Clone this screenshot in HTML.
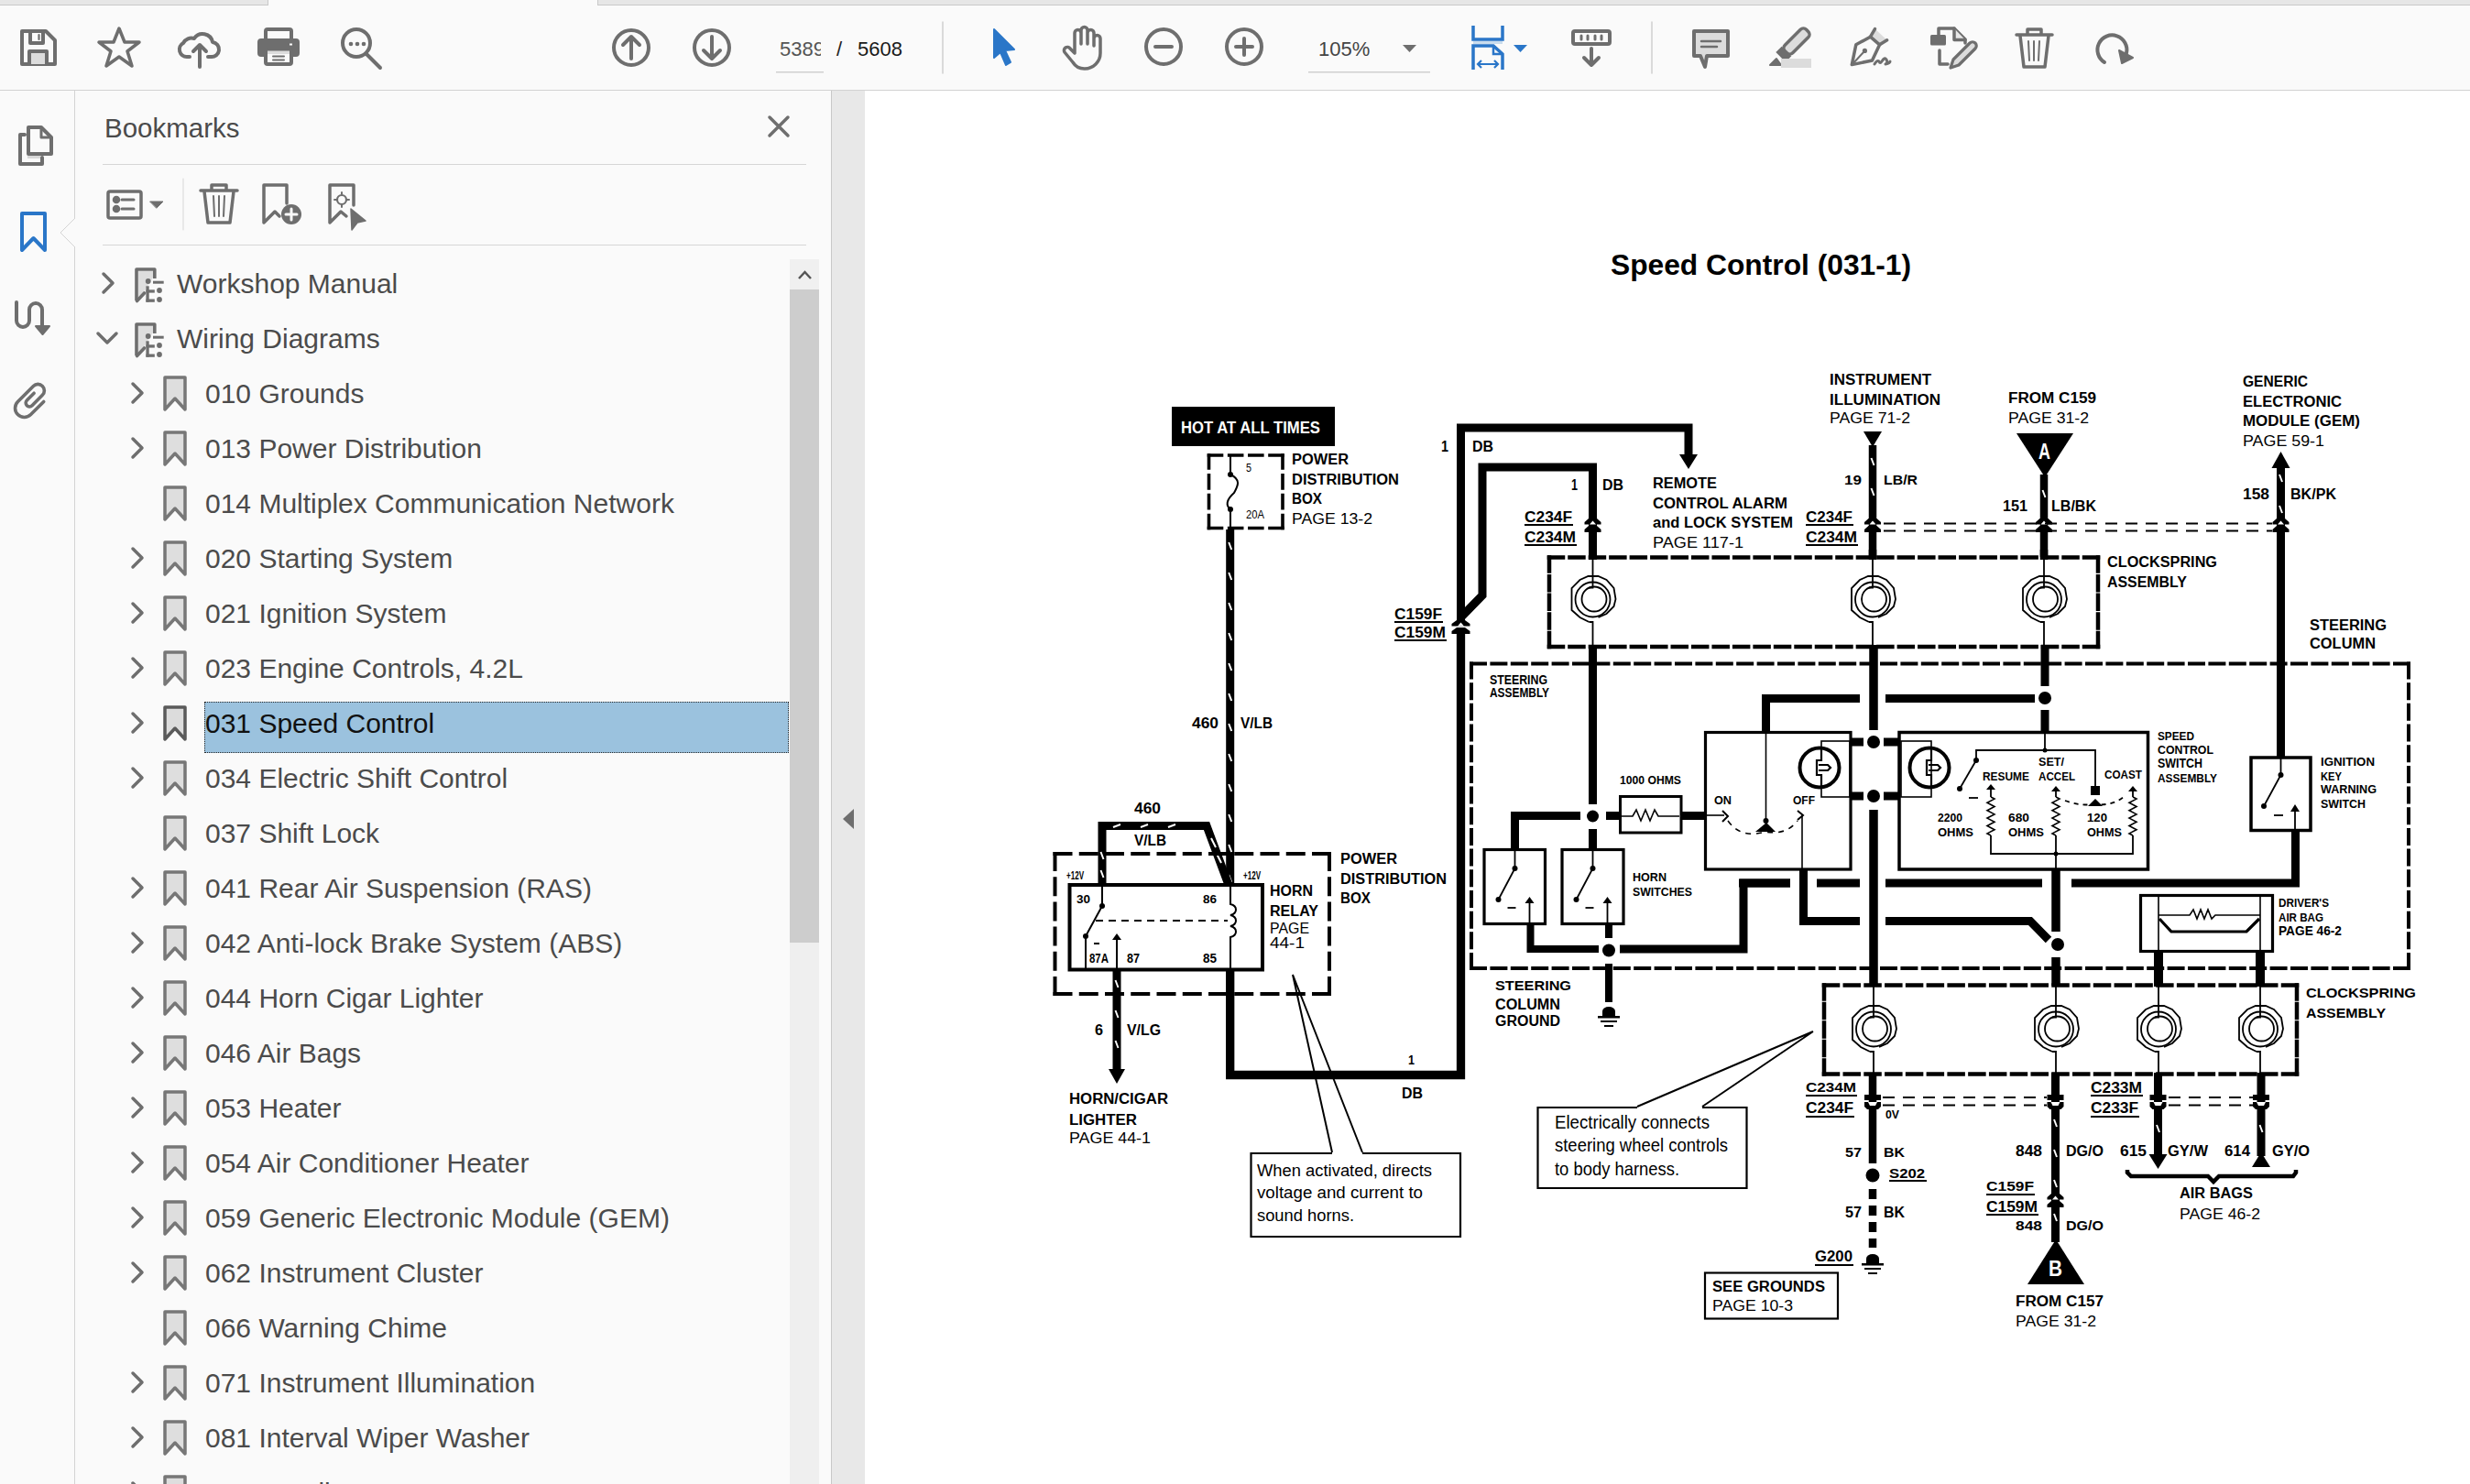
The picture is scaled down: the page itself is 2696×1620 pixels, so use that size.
<!DOCTYPE html>
<html><head><meta charset="utf-8">
<style>
*{box-sizing:border-box;margin:0;padding:0}
html,body{width:2696px;height:1620px;overflow:hidden;background:#fafafa;font-family:"Liberation Sans",sans-serif}
.abs{position:absolute}
#tabstrip-l{left:0;top:0;width:293px;height:6px;background:#e6e6e6;border-bottom:1px solid #c9c9c9;border-right:1px solid #c9c9c9}
#tabstrip-r{left:652px;top:0;width:2044px;height:6px;background:#e6e6e6;border-bottom:1px solid #c9c9c9;border-left:1px solid #c9c9c9}
#toolbar{left:0;top:6px;width:2696px;height:93px;background:#fafafa;border-bottom:1px solid #d2d2d2}
#rail{left:0;top:99px;width:82px;height:1521px;background:#fafafa;border-right:1px solid #d4d4d4}
#panel{left:82px;top:99px;width:826px;height:1521px;background:#fafafa;border-right:1px solid #c8c8c8}
#gutter{left:908px;top:99px;width:36px;height:1521px;background:#e8e8e8}
#doc{left:944px;top:99px;width:1752px;height:1521px;background:#fff}
.tb{position:absolute;top:0;left:0}
.bm{position:absolute;font-size:30px;color:#4b4b4b;white-space:nowrap;line-height:34px}
.sep{position:absolute;height:1px;background:#d6d6d6}
</style></head><body>
<div class="abs" id="tabstrip-l"></div>
<div class="abs" id="tabstrip-r"></div>
<div class="abs" id="toolbar"></div>
<div class="abs" id="rail"></div>
<div class="abs" id="panel"></div>
<div class="abs" id="gutter"></div>
<div class="abs" id="doc"></div>
<svg class="abs" style="left:908px;top:870px" width="36" height="50" viewBox="908 870 36 50"><path d="M920 894 L932 883 V905 Z" fill="#6e6e6e"/></svg>

<!-- TOOLBAR ICONS -->
<svg class="abs" style="left:0;top:0" width="2696" height="99" viewBox="0 0 2696 99">
<g fill="none" stroke="#6e6e6e" stroke-width="4" stroke-linejoin="round" stroke-linecap="round">
 <!-- save -->
 <path d="M24 34 H50 L60 44 V70 H24 Z"/>
 <path d="M33 34 V47 H47 V34"/>
 <path d="M42.5 38 V43" stroke-width="2.2"/>
 <rect x="32" y="56" width="19" height="14" fill="#dcdcdc" stroke="none"/>
 <path d="M32 70 V56 H51 V70"/>
 <!-- star -->
 <path d="M130 31 L136 46 L152 46 L139 56 L144 72 L130 62 L116 72 L121 56 L108 46 L124 46 Z" stroke-width="3.5"/>
 <!-- cloud upload -->
 <path d="M207 62 H204 A8 8 0 0 1 200 47 A10 10 0 0 1 212 42 A11 11 0 0 1 232 46 A8 8 0 0 1 230 62 H227"/>
 <path d="M218 73 V49 M211 56 L218 49 L225 56"/>
 <!-- print -->
 <rect x="290" y="32" width="28" height="14" rx="2"/>
 <rect x="283" y="44" width="42" height="16" rx="2" fill="#6e6e6e"/>
 <rect x="290" y="54" width="28" height="16" rx="2" fill="#fafafa"/>
 <rect x="292" y="55.5" width="24" height="3.5" fill="#dcdcdc" stroke="none"/>
 <path d="M298 61.5 H310 M298 65.5 H310" stroke-width="2"/>
 <rect x="316" y="47.5" width="3" height="2" fill="#fafafa" stroke="none"/>
 <!-- search more -->
 <circle cx="389" cy="47" r="15"/>
 <path d="M400 59 L415 74"/>
 <circle cx="383" cy="48" r="2.3" fill="#6e6e6e" stroke="none"/><circle cx="390" cy="48" r="2.3" fill="#6e6e6e" stroke="none"/><circle cx="397" cy="48" r="2.3" fill="#6e6e6e" stroke="none"/>
 <!-- up/down circles -->
 <circle cx="689" cy="52" r="19"/>
 <path d="M689 64 V40 M680 49 L689 40 L698 49"/>
 <circle cx="777" cy="52" r="19"/>
 <path d="M777 40 V64 M768 55 L777 64 L786 55"/>
 <!-- hand -->
 <path d="M1173 50 V36 a3.5 3.5 0 0 1 7 0 V48 M1180 48 V33 a3.5 3.5 0 0 1 7 0 V48 M1187 48 V36 a3.5 3.5 0 0 1 7 0 V50 M1194 50 V42 a3.5 3.5 0 0 1 7 0 V58 a17 17 0 0 1 -17 17 a15 15 0 0 1 -13 -7 L1162 57 a3.5 3.5 0 0 1 6 -4 L1173 58 V50" stroke-width="3.5"/>
 <!-- zoom out / in -->
 <circle cx="1270" cy="51" r="19"/>
 <path d="M1261 51 H1279"/>
 <circle cx="1358" cy="51" r="19"/>
 <path d="M1349 51 H1367 M1358 42 V60"/>
 <!-- separators -->
 <path d="M1029 24 V80 M1803 24 V80" stroke="#d0d0d0" stroke-width="1.5"/>
 <!-- measure -->
 <rect x="1717" y="34" width="40" height="14" rx="2"/>
 <path d="M1726 39 V43 M1733 39 V43 M1741 39 V43 M1748 39 V43" stroke-width="3"/>
 <path d="M1737 53 V71 M1729 63 L1737 71 L1745 63"/>
 <!-- comment -->
 <path d="M1849 34 H1886 V61 H1863 L1861 73 L1856 61 H1849 Z" fill="#dcdcdc"/>
 <path d="M1857 45 H1878 M1857 51 H1874" stroke-width="2.5"/>
 <!-- highlight -->
 <g transform="translate(1958.5 47.5) rotate(-45)">
  <rect x="-13" y="-6" width="33" height="12" rx="4.5" fill="#dcdcdc" stroke-width="3.5"/>
  <rect x="-21" y="-7.5" width="9" height="15" fill="#6e6e6e" stroke="none"/>
 </g>
 <path d="M1932 71 H1944 L1939 64 Z" fill="#6e6e6e" stroke-width="2"/>
 <rect x="1944" y="64" width="33" height="10" fill="#dcdcdc" stroke="none"/>
 <!-- sign -->
 <path d="M2046.5 31.6 L2041.5 40.2 L2051.6 48.8 L2059.7 43.8 Z" fill="#dcdcdc" stroke="none"/>
 <path d="M2021.3 70.6 L2025.8 48.8 L2041.5 40.2 L2051.6 48.8 L2043.5 66 Z" stroke-width="3.5"/>
 <path d="M2041.5 40.2 L2046.5 31.6 M2051.6 48.8 L2059.7 43.8" stroke-width="3.5"/>
 <path d="M2022 70 L2035 56" stroke-width="2"/>
 <circle cx="2035.4" cy="55.4" r="2.6" fill="#6e6e6e" stroke="none"/>
 <path d="M2046 70 q3 -5 5 -3 q1 3 3 0 q3 -5 5 -2 q2 4 -1 5 q5 -1 5 -3" stroke-width="3"/>
 <!-- edit pdf -->
 <rect x="2107" y="38" width="17" height="11.5" rx="1.5" fill="#6e6e6e" stroke="none"/>
 <path d="M2116 38 V31 H2133 L2145 43 V47" stroke-width="3.5"/>
 <path d="M2133 31 V43.5 H2145" fill="#e8e8e8" stroke-width="3.5"/>
 <path d="M2117 55 V70 H2126" stroke-width="3.5"/>
 <path d="M2129 74 L2132 65 L2150 47 a4 4 0 0 1 6 6 L2138 71 Z" fill="#dcdcdc" stroke-width="3.2"/>
 <!-- trash -->
 <path d="M2201 38 H2240 M2213 37 V32 H2228 V37" stroke-width="3.5"/>
 <path d="M2205 39 L2209 73 H2232 L2236 39" stroke-width="3.5"/>
 <path d="M2214 45 L2215 66 M2220 45 V66 M2226 45 L2225 66" stroke-width="2"/>
 <!-- rotate -->
 <path d="M2297 68 A16 16 0 1 1 2321 58" stroke-width="4"/>
 <path d="M2313 55 L2328 63 L2316 69 Z" fill="#6e6e6e" stroke-width="2"/>
</g>
<!-- select arrow (blue) -->
<path d="M1085 32 L1107 54 L1097 55 L1103 68 L1098 71 L1092 57 L1085 63 Z" fill="#2a76c8" stroke="#2a76c8" stroke-width="2" stroke-linejoin="round"/>
<!-- fit width (blue) -->
<g fill="none" stroke="#2a76c8" stroke-width="3.5">
 <path d="M1608 28 V43 H1640 V28"/>
 <path d="M1608 76 V50 H1630 L1640 59 V76"/>
 <path d="M1630 50 V59 H1640" stroke-width="2.5"/>
 <path d="M1614 70 H1634 M1617 66 L1613 70 L1617 74 M1631 66 L1635 70 L1631 74" stroke-width="2.2"/>
</g>
<rect x="1608" y="45" width="32" height="3" fill="#c9dced"/>
<path d="M1652 49 H1667 L1659.5 57 Z" fill="#2a76c8"/>
<path d="M1531 49 H1546 L1538.5 57 Z" fill="#6e6e6e"/>
<rect x="847" y="78" width="52" height="1.5" fill="#cfcfcf"/>
<rect x="1428" y="78" width="133" height="1.5" fill="#cfcfcf"/>
</svg>
<div class="abs" style="left:851px;top:39px;width:45px;height:30px;overflow:hidden;font-size:22px;color:#555;line-height:30px;white-space:nowrap">5389</div>
<div class="abs" style="left:913px;top:39px;font-size:22px;color:#222;line-height:30px">/</div>
<div class="abs" style="left:936px;top:39px;font-size:22px;color:#1a1a1a;line-height:30px">5608</div>
<div class="abs" style="left:1439px;top:39px;font-size:22px;color:#444;line-height:30px">105%</div>

<!-- LEFT RAIL -->
<svg class="abs" style="left:0;top:99px" width="82" height="400" viewBox="0 99 82 400">
<g fill="none" stroke="#6e6e6e" stroke-width="4" stroke-linejoin="round" stroke-linecap="round">
 <path d="M31 139 H45 L56 150 V168 H31 Z"/>
 <path d="M45 139 V150 H56" stroke-width="3"/>
 <path d="M27 147 H22 V179 H46 V172"/>
 <rect x="30" y="170" width="14" height="3" fill="#d8d8d8" stroke="none"/>
 <!-- signature path -->
 <path d="M18 330 V350 a7 7 0 0 0 14 0 V338 a7 7 0 0 1 14 0 V358"/>
 <path d="M39 356 H54 L46.5 365 Z" fill="#6e6e6e" stroke-width="2"/>
 <!-- paperclip -->
 <path d="M10 -8 V12 A10 10 0 0 1 -10 12 V-12 A7 7 0 0 1 4 -12 V4 A4 4 0 0 1 -4 4 V-7" stroke-width="3.6" transform="translate(35 437) rotate(45)"/>
</g>
<path d="M24 233 H49 V273 L36.5 260 L24 273 Z" fill="none" stroke="#2a76c8" stroke-width="4" stroke-linejoin="round"/>
<path d="M82 238 L66 254 L82 270" fill="#fafafa" stroke="#d4d4d4" stroke-width="1"/>
<rect x="82" y="237" width="2" height="34" fill="#fafafa"/>
</svg>

<!-- PANEL -->
<div class="abs" style="left:114px;top:123px;font-size:29.5px;color:#4b4b4b;line-height:34px">Bookmarks</div>
<div class="sep" style="left:112px;top:179px;width:768px"></div>
<div class="sep" style="left:112px;top:267px;width:768px"></div>
<div class="abs" style="left:223px;top:766px;width:638px;height:56px;background:#9bc2de;border:1px dotted #2a2a2a"></div>
<svg class="abs" style="left:82px;top:99px" width="826" height="1521" viewBox="82 99 826 1521">
<g fill="none" stroke="#6e6e6e" stroke-width="3.5" stroke-linejoin="round" stroke-linecap="round">
 <path d="M840 128 L860 148 M860 128 L840 148" stroke-width="3.5"/>
 <!-- list icon -->
 <rect x="118" y="209" width="36" height="29" rx="2" stroke-width="3.5"/>
 <circle cx="127" cy="218" r="2.5" fill="#6e6e6e"/><circle cx="127" cy="228" r="2.5" fill="#6e6e6e"/>
 <path d="M133 218 H146 M133 228 H146" stroke-width="3"/>
 <path d="M164 220 H178 L171 227 Z" fill="#6e6e6e" stroke-width="1"/>
 <path d="M200 195 V251" stroke="#d6d6d6" stroke-width="1"/>
 <!-- trash -->
 <path d="M219 208 H259 M231 207 V202 H247 V207" stroke-width="3.5"/>
 <path d="M223 209 L227 243 H251 L255 209" stroke-width="3.5"/>
 <path d="M233 214 L234 236 M239 214 V236 M245 214 L244 236" stroke-width="2"/>
 <!-- bookmark add -->
 <path d="M288 243 V202 H313 V222 M288 243 L300 231 L305 236" stroke-width="3.5"/>
 <circle cx="318" cy="234" r="11" fill="#6e6e6e" stroke="none"/>
 <path d="M312 234 H324 M318 228 V240" stroke="#fafafa" stroke-width="3"/>
 <!-- bookmark target -->
 <path d="M360 243 V202 H386 V224 M360 243 L372 231 L378 236" stroke-width="3.5"/>
 <circle cx="373" cy="218" r="5" stroke-width="2.2"/>
 <path d="M373 210 V212 M373 224 V226 M365 218 H367 M379 218 H381" stroke-width="2"/>
 <path d="M383 228 L399 241 L390 243 L384 251 Z" fill="#6e6e6e" stroke-width="1.5"/>
<path d="M113 299 L123 309 L113 319"/>
<path d="M151 296 H167 V303 L157 319 L151 327 Z" fill="#dedede" stroke="none"/>
<path d="M149 328 V294 H168.8 V304" stroke-width="3.6" stroke-linecap="butt"/>
<path d="M149.5 328.5 L157.5 320" stroke-width="3.6"/>
<circle cx="161.7" cy="307" r="2.9" fill="#6e6e6e" stroke="none"/>
<rect x="167" y="306.7" width="11.7" height="3" fill="#6e6e6e" stroke="none"/>
<rect x="159.4" y="312.3" width="3.3" height="17.4" fill="#6e6e6e" stroke="none"/>
<rect x="159.4" y="316.3" width="9.4" height="3.3" fill="#6e6e6e" stroke="none"/>
<rect x="159.4" y="326.5" width="9.4" height="3.3" fill="#6e6e6e" stroke="none"/>
<circle cx="174" cy="317" r="2.9" fill="#6e6e6e" stroke="none"/>
<circle cx="174" cy="327" r="2.9" fill="#6e6e6e" stroke="none"/>
<path d="M107 364 L117 374 L127 364"/>
<path d="M151 356 H167 V363 L157 379 L151 387 Z" fill="#dedede" stroke="none"/>
<path d="M149 388 V354 H168.8 V364" stroke-width="3.6" stroke-linecap="butt"/>
<path d="M149.5 388.5 L157.5 380" stroke-width="3.6"/>
<circle cx="161.7" cy="367" r="2.9" fill="#6e6e6e" stroke="none"/>
<rect x="167" y="366.7" width="11.7" height="3" fill="#6e6e6e" stroke="none"/>
<rect x="159.4" y="372.3" width="3.3" height="17.4" fill="#6e6e6e" stroke="none"/>
<rect x="159.4" y="376.3" width="9.4" height="3.3" fill="#6e6e6e" stroke="none"/>
<rect x="159.4" y="386.5" width="9.4" height="3.3" fill="#6e6e6e" stroke="none"/>
<circle cx="174" cy="377" r="2.9" fill="#6e6e6e" stroke="none"/>
<circle cx="174" cy="387" r="2.9" fill="#6e6e6e" stroke="none"/>
<path d="M145 419 L155 429 L145 439"/>
<path d="M180 412 H202 V447 L191 435 L180 447 Z" fill="#dedede" stroke="#777" stroke-width="3.5"/>
<path d="M145 479 L155 489 L145 499"/>
<path d="M180 472 H202 V507 L191 495 L180 507 Z" fill="#dedede" stroke="#777" stroke-width="3.5"/>
<path d="M180 532 H202 V567 L191 555 L180 567 Z" fill="#dedede" stroke="#777" stroke-width="3.5"/>
<path d="M145 599 L155 609 L145 619"/>
<path d="M180 592 H202 V627 L191 615 L180 627 Z" fill="#dedede" stroke="#777" stroke-width="3.5"/>
<path d="M145 659 L155 669 L145 679"/>
<path d="M180 652 H202 V687 L191 675 L180 687 Z" fill="#dedede" stroke="#777" stroke-width="3.5"/>
<path d="M145 719 L155 729 L145 739"/>
<path d="M180 712 H202 V747 L191 735 L180 747 Z" fill="#dedede" stroke="#777" stroke-width="3.5"/>
<path d="M145 779 L155 789 L145 799"/>
<path d="M180 772 H202 V807 L191 795 L180 807 Z" fill="#dcdcdc" stroke="#5a5a5a" stroke-width="3.5"/>
<path d="M145 839 L155 849 L145 859"/>
<path d="M180 832 H202 V867 L191 855 L180 867 Z" fill="#dedede" stroke="#777" stroke-width="3.5"/>
<path d="M180 892 H202 V927 L191 915 L180 927 Z" fill="#dedede" stroke="#777" stroke-width="3.5"/>
<path d="M145 959 L155 969 L145 979"/>
<path d="M180 952 H202 V987 L191 975 L180 987 Z" fill="#dedede" stroke="#777" stroke-width="3.5"/>
<path d="M145 1019 L155 1029 L145 1039"/>
<path d="M180 1012 H202 V1047 L191 1035 L180 1047 Z" fill="#dedede" stroke="#777" stroke-width="3.5"/>
<path d="M145 1079 L155 1089 L145 1099"/>
<path d="M180 1072 H202 V1107 L191 1095 L180 1107 Z" fill="#dedede" stroke="#777" stroke-width="3.5"/>
<path d="M145 1139 L155 1149 L145 1159"/>
<path d="M180 1132 H202 V1167 L191 1155 L180 1167 Z" fill="#dedede" stroke="#777" stroke-width="3.5"/>
<path d="M145 1199 L155 1209 L145 1219"/>
<path d="M180 1192 H202 V1227 L191 1215 L180 1227 Z" fill="#dedede" stroke="#777" stroke-width="3.5"/>
<path d="M145 1259 L155 1269 L145 1279"/>
<path d="M180 1252 H202 V1287 L191 1275 L180 1287 Z" fill="#dedede" stroke="#777" stroke-width="3.5"/>
<path d="M145 1319 L155 1329 L145 1339"/>
<path d="M180 1312 H202 V1347 L191 1335 L180 1347 Z" fill="#dedede" stroke="#777" stroke-width="3.5"/>
<path d="M145 1379 L155 1389 L145 1399"/>
<path d="M180 1372 H202 V1407 L191 1395 L180 1407 Z" fill="#dedede" stroke="#777" stroke-width="3.5"/>
<path d="M180 1432 H202 V1467 L191 1455 L180 1467 Z" fill="#dedede" stroke="#777" stroke-width="3.5"/>
<path d="M145 1499 L155 1509 L145 1519"/>
<path d="M180 1492 H202 V1527 L191 1515 L180 1527 Z" fill="#dedede" stroke="#777" stroke-width="3.5"/>
<path d="M145 1559 L155 1569 L145 1579"/>
<path d="M180 1552 H202 V1587 L191 1575 L180 1587 Z" fill="#dedede" stroke="#777" stroke-width="3.5"/>
<path d="M145 1619 L155 1629 L145 1639"/>
<path d="M180 1612 H202 V1647 L191 1635 L180 1647 Z" fill="#dedede" stroke="#777" stroke-width="3.5"/>
</g>
<!-- scrollbar -->
<rect x="862" y="283" width="32" height="33" fill="#f0f0f0"/>
<path d="M872 304 L878.5 297 L885 304" fill="none" stroke="#555" stroke-width="2.5"/>
<rect x="862" y="316" width="32" height="713" fill="#cdcdcd"/>
<rect x="862" y="1029" width="32" height="591" fill="#efefef"/>
</svg>
<div class="bm" style="left:193px;top:293px;color:#4b4b4b">Workshop Manual</div>
<div class="bm" style="left:193px;top:353px;color:#4b4b4b">Wiring Diagrams</div>
<div class="bm" style="left:224px;top:413px;color:#4b4b4b">010 Grounds</div>
<div class="bm" style="left:224px;top:473px;color:#4b4b4b">013 Power Distribution</div>
<div class="bm" style="left:224px;top:533px;color:#4b4b4b">014 Multiplex Communication Network</div>
<div class="bm" style="left:224px;top:593px;color:#4b4b4b">020 Starting System</div>
<div class="bm" style="left:224px;top:653px;color:#4b4b4b">021 Ignition System</div>
<div class="bm" style="left:224px;top:713px;color:#4b4b4b">023 Engine Controls, 4.2L</div>
<div class="bm" style="left:224px;top:773px;color:#111">031 Speed Control</div>
<div class="bm" style="left:224px;top:833px;color:#4b4b4b">034 Electric Shift Control</div>
<div class="bm" style="left:224px;top:893px;color:#4b4b4b">037 Shift Lock</div>
<div class="bm" style="left:224px;top:953px;color:#4b4b4b">041 Rear Air Suspension (RAS)</div>
<div class="bm" style="left:224px;top:1013px;color:#4b4b4b">042 Anti-lock Brake System (ABS)</div>
<div class="bm" style="left:224px;top:1073px;color:#4b4b4b">044 Horn Cigar Lighter</div>
<div class="bm" style="left:224px;top:1133px;color:#4b4b4b">046 Air Bags</div>
<div class="bm" style="left:224px;top:1193px;color:#4b4b4b">053 Heater</div>
<div class="bm" style="left:224px;top:1253px;color:#4b4b4b">054 Air Conditioner Heater</div>
<div class="bm" style="left:224px;top:1313px;color:#4b4b4b">059 Generic Electronic Module (GEM)</div>
<div class="bm" style="left:224px;top:1373px;color:#4b4b4b">062 Instrument Cluster</div>
<div class="bm" style="left:224px;top:1433px;color:#4b4b4b">066 Warning Chime</div>
<div class="bm" style="left:224px;top:1493px;color:#4b4b4b">071 Instrument Illumination</div>
<div class="bm" style="left:224px;top:1553px;color:#4b4b4b">081 Interval Wiper Washer</div>
<div class="bm" style="left:224px;top:1613px;color:#4b4b4b">085 Headlamps</div>

<!--DIAG-->
<svg class="abs" style="left:944px;top:99px" width="1752" height="1521" viewBox="944 99 1752 1521">
<g font-family="Liberation Sans, sans-serif">
<text x="1758" y="300" font-size="32" font-weight="bold" textLength="328" lengthAdjust="spacingAndGlyphs">Speed Control (031-1)</text>
<rect x="1279" y="444" width="178" height="43" fill="#000"/>
<text x="1289" y="473" font-size="18.9" font-weight="bold" fill="#fff" textLength="152" lengthAdjust="spacingAndGlyphs">HOT AT ALL TIMES</text>
<path d="M1319.5 497 L1400 497" fill="none" stroke="#000" stroke-width="3.6" stroke-dasharray="14 8.167" stroke-linecap="square"/>
<path d="M1400 497 L1400 576.5" fill="none" stroke="#000" stroke-width="3.6" stroke-dasharray="14 7.833" stroke-linecap="square"/>
<path d="M1400 576.5 L1319.5 576.5" fill="none" stroke="#000" stroke-width="3.6" stroke-dasharray="14 8.167" stroke-linecap="square"/>
<path d="M1319.5 576.5 L1319.5 497" fill="none" stroke="#000" stroke-width="3.6" stroke-dasharray="14 7.833" stroke-linecap="square"/>
<path d="M1343 497 V518 M1343 556 V578" stroke="#000" stroke-width="2"/>
<path d="M1343 518 C1356 524 1350 532 1347 538 C1338 546 1338 552 1343 556" fill="none" stroke="#000" stroke-width="2"/>
<circle cx="1343" cy="518" r="3"/><circle cx="1343" cy="556" r="3"/>
<text x="1360" y="515" font-size="13.1" font-weight="normal" fill="#000" textLength="6" lengthAdjust="spacingAndGlyphs">5</text>
<text x="1360" y="566" font-size="13.1" font-weight="normal" fill="#000" textLength="20" lengthAdjust="spacingAndGlyphs">20A</text>
<text x="1410" y="507" font-size="16.0" font-weight="bold" fill="#000" textLength="62" lengthAdjust="spacingAndGlyphs">POWER</text>
<text x="1410" y="529" font-size="16.0" font-weight="bold" fill="#000" textLength="117" lengthAdjust="spacingAndGlyphs">DISTRIBUTION</text>
<text x="1410" y="550" font-size="16.0" font-weight="bold" fill="#000" textLength="33" lengthAdjust="spacingAndGlyphs">BOX</text>
<text x="1410" y="572" font-size="16.0" font-weight="normal" fill="#000" textLength="88" lengthAdjust="spacingAndGlyphs">PAGE 13-2</text>
<rect x="1338.2" y="578" width="9.0" height="388" fill="#000"/>
<path d="M1341.2 592 L1344.2 600" stroke="#fff" stroke-width="2"/>
<path d="M1341.2 625 L1344.2 633" stroke="#fff" stroke-width="2"/>
<path d="M1341.2 658 L1344.2 666" stroke="#fff" stroke-width="2"/>
<path d="M1341.2 691 L1344.2 699" stroke="#fff" stroke-width="2"/>
<path d="M1341.2 724 L1344.2 732" stroke="#fff" stroke-width="2"/>
<path d="M1341.2 757 L1344.2 765" stroke="#fff" stroke-width="2"/>
<path d="M1341.2 790 L1344.2 798" stroke="#fff" stroke-width="2"/>
<path d="M1341.2 823 L1344.2 831" stroke="#fff" stroke-width="2"/>
<path d="M1341.2 856 L1344.2 864" stroke="#fff" stroke-width="2"/>
<path d="M1341.2 889 L1344.2 897" stroke="#fff" stroke-width="2"/>
<path d="M1341.2 922 L1344.2 930" stroke="#fff" stroke-width="2"/>
<path d="M1341.2 955 L1344.2 963" stroke="#fff" stroke-width="2"/>
<text x="1301" y="795" font-size="16.0" font-weight="bold" fill="#000" textLength="29" lengthAdjust="spacingAndGlyphs">460</text>
<text x="1354" y="795" font-size="16.0" font-weight="bold" fill="#000" textLength="35" lengthAdjust="spacingAndGlyphs">V/LB</text>
<path d="M1203 966 L1203 901.5 L1317 901.5 L1341 966" fill="none" stroke="#000" stroke-width="9" stroke-linejoin="miter" stroke-linecap="butt"/>
<path d="M1215 903.0 L1223 900.0" stroke="#fff" stroke-width="2"/>
<path d="M1245 903.0 L1253 900.0" stroke="#fff" stroke-width="2"/>
<path d="M1275 903.0 L1283 900.0" stroke="#fff" stroke-width="2"/>
<path d="M1201.5 930 L1204.5 938 M1201.5 950 L1204.5 958" stroke="#fff" stroke-width="2"/>
<path d="M1322 915 L1327 925 M1328 932 L1333 942" stroke="#fff" stroke-width="2"/>
<text x="1238" y="888" font-size="16.0" font-weight="bold" fill="#000" textLength="29" lengthAdjust="spacingAndGlyphs">460</text>
<text x="1238" y="923" font-size="16.0" font-weight="bold" fill="#000" textLength="35" lengthAdjust="spacingAndGlyphs">V/LB</text>
<path d="M1151.5 932 L1451 932" fill="none" stroke="#000" stroke-width="4" stroke-dasharray="17 11.250" stroke-linecap="square"/>
<path d="M1451 932 L1451 1085" fill="none" stroke="#000" stroke-width="4" stroke-dasharray="17 10.200" stroke-linecap="square"/>
<path d="M1451 1085 L1151.5 1085" fill="none" stroke="#000" stroke-width="4" stroke-dasharray="17 11.250" stroke-linecap="square"/>
<path d="M1151.5 1085 L1151.5 932" fill="none" stroke="#000" stroke-width="4" stroke-dasharray="17 10.200" stroke-linecap="square"/>
<text x="1463" y="943" font-size="16.0" font-weight="bold" fill="#000" textLength="62" lengthAdjust="spacingAndGlyphs">POWER</text>
<text x="1463" y="965" font-size="16.0" font-weight="bold" fill="#000" textLength="116" lengthAdjust="spacingAndGlyphs">DISTRIBUTION</text>
<text x="1463" y="986" font-size="16.0" font-weight="bold" fill="#000" textLength="33" lengthAdjust="spacingAndGlyphs">BOX</text>
<text x="1164" y="960" font-size="13.1" font-weight="bold" fill="#000" textLength="19" lengthAdjust="spacingAndGlyphs">+12V</text>
<text x="1357" y="960" font-size="13.1" font-weight="bold" fill="#000" textLength="19" lengthAdjust="spacingAndGlyphs">+12V</text>
<rect x="1167.5" y="966" width="210.5" height="92.5" fill="none" stroke="#000" stroke-width="4"/>
<text x="1175" y="986" font-size="13.1" font-weight="bold" fill="#000" textLength="15" lengthAdjust="spacingAndGlyphs">30</text>
<text x="1313" y="986" font-size="13.1" font-weight="bold" fill="#000" textLength="15" lengthAdjust="spacingAndGlyphs">86</text>
<text x="1189" y="1051" font-size="14.5" font-weight="bold" fill="#000" textLength="21" lengthAdjust="spacingAndGlyphs">87A</text>
<text x="1230" y="1051" font-size="14.5" font-weight="bold" fill="#000" textLength="14" lengthAdjust="spacingAndGlyphs">87</text>
<text x="1313" y="1051" font-size="14.5" font-weight="bold" fill="#000" textLength="15" lengthAdjust="spacingAndGlyphs">85</text>
<g stroke="#000" stroke-width="2" fill="none">
<path d="M1203 966 V989 L1185 1022 V1058"/>
<path d="M1194 1030 H1200"/>
<path d="M1219 1058 V1022"/>
<path d="M1196 1005 H1340" stroke-dasharray="8 6"/>
<path d="M1343 966 V987 C1351 989 1351 997 1343 999 C1351 1001 1351 1009 1343 1011 C1351 1013 1351 1021 1343 1023 V1058"/>
</g>
<circle cx="1203" cy="989" r="3"/><circle cx="1185" cy="1022" r="3"/>
<path d="M1214 1026 L1219 1019 L1224 1026 Z"/>
<text x="1386" y="978" font-size="17.4" font-weight="bold" fill="#000" textLength="47" lengthAdjust="spacingAndGlyphs">HORN</text>
<text x="1386" y="1000" font-size="17.4" font-weight="bold" fill="#000" textLength="53" lengthAdjust="spacingAndGlyphs">RELAY</text>
<text x="1386" y="1019" font-size="17.4" font-weight="normal" fill="#000" textLength="43" lengthAdjust="spacingAndGlyphs">PAGE</text>
<text x="1386" y="1035" font-size="17.4" font-weight="normal" fill="#000" textLength="38" lengthAdjust="spacingAndGlyphs">44-1</text>
<rect x="1214.5" y="1058" width="9.0" height="110" fill="#000"/>
<path d="M1217.5 1070 L1220.5 1078" stroke="#fff" stroke-width="2"/>
<path d="M1217.5 1103 L1220.5 1111" stroke="#fff" stroke-width="2"/>
<path d="M1217.5 1136 L1220.5 1144" stroke="#fff" stroke-width="2"/>
<path d="M1210.0 1167 H1228.0 L1219 1183 Z"/>
<text x="1195" y="1130" font-size="16.0" font-weight="bold" fill="#000" textLength="9" lengthAdjust="spacingAndGlyphs">6</text>
<text x="1230" y="1130" font-size="16.0" font-weight="bold" fill="#000" textLength="37" lengthAdjust="spacingAndGlyphs">V/LG</text>
<text x="1167" y="1205" font-size="16.0" font-weight="bold" fill="#000" textLength="108" lengthAdjust="spacingAndGlyphs">HORN/CIGAR</text>
<text x="1167" y="1228" font-size="17.4" font-weight="bold" fill="#000" textLength="74" lengthAdjust="spacingAndGlyphs">LIGHTER</text>
<text x="1167" y="1248" font-size="17.4" font-weight="normal" fill="#000" textLength="89" lengthAdjust="spacingAndGlyphs">PAGE 44-1</text>
<path d="M1342.7 1058 L1342.7 1173.5 L1594.5 1173.5 L1594.5 690" fill="none" stroke="#000" stroke-width="9.3" stroke-linejoin="miter" stroke-linecap="butt"/>
<text x="1537" y="1162" font-size="14.5" font-weight="bold" fill="#000" textLength="7" lengthAdjust="spacingAndGlyphs">1</text>
<text x="1530" y="1199" font-size="16.0" font-weight="bold" fill="#000" textLength="23" lengthAdjust="spacingAndGlyphs">DB</text>
<path d="M1411 1064 L1454 1258 M1411 1064 L1487 1258" stroke="#000" stroke-width="2" fill="none"/>
<path d="M1454 1259 H1365.5 V1350 H1594 V1259 H1487" fill="none" stroke="#000" stroke-width="2.2"/>
<text x="1372" y="1284" font-size="18.9" font-weight="normal" fill="#000" textLength="191" lengthAdjust="spacingAndGlyphs">When activated, directs</text>
<text x="1372" y="1308" font-size="18.9" font-weight="normal" fill="#000" textLength="181" lengthAdjust="spacingAndGlyphs">voltage and current to</text>
<text x="1372" y="1333" font-size="18.9" font-weight="normal" fill="#000" textLength="106" lengthAdjust="spacingAndGlyphs">sound horns.</text>
<path d="M1594.5 680 L1594.5 467 L1843 467 L1843 497" fill="none" stroke="#000" stroke-width="9" stroke-linejoin="miter" stroke-linecap="butt"/>
<path d="M1833.0 496 H1853.0 L1843 512 Z"/>
<text x="1573" y="493" font-size="16.0" font-weight="bold" fill="#000" textLength="8" lengthAdjust="spacingAndGlyphs">1</text>
<text x="1607" y="493" font-size="16.0" font-weight="bold" fill="#000" textLength="23" lengthAdjust="spacingAndGlyphs">DB</text>
<path d="M1594.5 674 L1618 650 L1618 510 L1738.5 510 L1738.5 608" fill="none" stroke="#000" stroke-width="9" stroke-linejoin="miter" stroke-linecap="butt"/>
<text x="1715" y="535" font-size="16.0" font-weight="bold" fill="#000" textLength="7" lengthAdjust="spacingAndGlyphs">1</text>
<text x="1749" y="535" font-size="16.0" font-weight="bold" fill="#000" textLength="23" lengthAdjust="spacingAndGlyphs">DB</text>
<path d="M1584.5 683.5 V681 L1590.0 677 H1599.0 L1604.5 681 V683.5 Z"/>
<path d="M1591.0 683.6 L1594.5 679.5 L1598.0 683.6 Z" fill="#fff"/>
<path d="M1584.5 692 V689 L1590.0 685 H1599.0 L1604.5 689 V692 Z"/>
<text x="1522" y="676" font-size="17.4" font-weight="bold" fill="#000" textLength="52" lengthAdjust="spacingAndGlyphs">C159F</text>
<rect x="1522" y="678.0" width="53" height="2"/>
<text x="1522" y="696" font-size="17.4" font-weight="bold" fill="#000" textLength="56" lengthAdjust="spacingAndGlyphs">C159M</text>
<rect x="1522" y="698.0" width="57" height="2"/>
<path d="M1729.5 572.5 V570 L1734.0 566 H1743.0 L1747.5 570 V572.5 Z"/>
<path d="M1735.0 572.6 L1738.5 568.5 L1742.0 572.6 Z" fill="#fff"/>
<path d="M1729.5 581 V578 L1734.0 574 H1743.0 L1747.5 578 V581 Z"/>
<text x="1664" y="570" font-size="16.0" font-weight="bold" fill="#000" textLength="52" lengthAdjust="spacingAndGlyphs">C234F</text>
<rect x="1664" y="572.0" width="53" height="2"/>
<text x="1664" y="592" font-size="16.0" font-weight="bold" fill="#000" textLength="56" lengthAdjust="spacingAndGlyphs">C234M</text>
<rect x="1664" y="594.0" width="57" height="2"/>
<text x="1804" y="533" font-size="16.0" font-weight="bold" fill="#000" textLength="70" lengthAdjust="spacingAndGlyphs">REMOTE</text>
<text x="1804" y="555" font-size="16.0" font-weight="bold" fill="#000" textLength="147" lengthAdjust="spacingAndGlyphs">CONTROL  ALARM</text>
<text x="1804" y="576" font-size="16.0" font-weight="bold" fill="#000" textLength="153" lengthAdjust="spacingAndGlyphs">and  LOCK  SYSTEM</text>
<text x="1804" y="598" font-size="16.0" font-weight="normal" fill="#000" textLength="99" lengthAdjust="spacingAndGlyphs">PAGE  117-1</text>
<text x="1997" y="420" font-size="16.0" font-weight="bold" fill="#000" textLength="111" lengthAdjust="spacingAndGlyphs">INSTRUMENT</text>
<text x="1997" y="442" font-size="16.0" font-weight="bold" fill="#000" textLength="121" lengthAdjust="spacingAndGlyphs">ILLUMINATION</text>
<text x="1997" y="462" font-size="16.0" font-weight="normal" fill="#000" textLength="88" lengthAdjust="spacingAndGlyphs">PAGE 71-2</text>
<path d="M2034.0 471 H2054.0 L2044 488 Z"/>
<rect x="2039.75" y="486" width="8.5" height="122" fill="#000"/>
<path d="M2042.5 500 L2045.5 508" stroke="#fff" stroke-width="2"/>
<path d="M2042.5 533 L2045.5 541" stroke="#fff" stroke-width="2"/>
<text x="2013" y="529" font-size="14.5" font-weight="bold" fill="#000" textLength="19" lengthAdjust="spacingAndGlyphs">19</text>
<text x="2056" y="529" font-size="14.5" font-weight="bold" fill="#000" textLength="37" lengthAdjust="spacingAndGlyphs">LB/R</text>
<path d="M2035 572.5 V570 L2039.5 566 H2048.5 L2053 570 V572.5 Z"/>
<path d="M2040.5 572.6 L2044 568.5 L2047.5 572.6 Z" fill="#fff"/>
<path d="M2035 581 V578 L2039.5 574 H2048.5 L2053 578 V581 Z"/>
<text x="1971" y="570" font-size="16.0" font-weight="bold" fill="#000" textLength="51" lengthAdjust="spacingAndGlyphs">C234F</text>
<rect x="1971" y="572.0" width="52" height="2"/>
<text x="1971" y="592" font-size="16.0" font-weight="bold" fill="#000" textLength="56" lengthAdjust="spacingAndGlyphs">C234M</text>
<rect x="1971" y="594.0" width="57" height="2"/>
<text x="2192" y="440" font-size="16.0" font-weight="bold" fill="#000" textLength="96" lengthAdjust="spacingAndGlyphs">FROM  C159</text>
<text x="2192" y="462" font-size="16.0" font-weight="normal" fill="#000" textLength="88" lengthAdjust="spacingAndGlyphs">PAGE 31-2</text>
<path d="M2201 473 H2263 L2232 521 Z"/>
<text x="2225" y="501" font-size="23.3" font-weight="bold" fill="#fff" textLength="13" lengthAdjust="spacingAndGlyphs">A</text>
<rect x="2226.75" y="518" width="8.5" height="90" fill="#000"/>
<path d="M2229.5 535 L2232.5 543" stroke="#fff" stroke-width="2"/>
<text x="2186" y="558" font-size="16.0" font-weight="bold" fill="#000" textLength="27" lengthAdjust="spacingAndGlyphs">151</text>
<text x="2239" y="558" font-size="16.0" font-weight="bold" fill="#000" textLength="49" lengthAdjust="spacingAndGlyphs">LB/BK</text>
<path d="M2222 572.5 V570 L2226.5 566 H2235.5 L2240 570 V572.5 Z"/>
<path d="M2227.5 572.6 L2231 568.5 L2234.5 572.6 Z" fill="#fff"/>
<path d="M2222 581 V578 L2226.5 574 H2235.5 L2240 578 V581 Z"/>
<text x="2448" y="422" font-size="16.0" font-weight="bold" fill="#000" textLength="71" lengthAdjust="spacingAndGlyphs">GENERIC</text>
<text x="2448" y="444" font-size="16.0" font-weight="bold" fill="#000" textLength="108" lengthAdjust="spacingAndGlyphs">ELECTRONIC</text>
<text x="2448" y="465" font-size="17.4" font-weight="bold" fill="#000" textLength="128" lengthAdjust="spacingAndGlyphs">MODULE  (GEM)</text>
<text x="2448" y="487" font-size="17.4" font-weight="normal" fill="#000" textLength="89" lengthAdjust="spacingAndGlyphs">PAGE 59-1</text>
<path d="M2479.5 511 H2499.5 L2489.5 493 Z"/>
<rect x="2485.0" y="509" width="9.0" height="318" fill="#000"/>
<path d="M2488.0 518 L2491.0 526" stroke="#fff" stroke-width="2"/>
<path d="M2488.0 552 L2491.0 560" stroke="#fff" stroke-width="2"/>
<text x="2448" y="545" font-size="16.0" font-weight="bold" fill="#000" textLength="29" lengthAdjust="spacingAndGlyphs">158</text>
<text x="2500" y="545" font-size="16.0" font-weight="bold" fill="#000" textLength="50" lengthAdjust="spacingAndGlyphs">BK/PK</text>
<path d="M2480.5 572.5 V570 L2485.0 566 H2494.0 L2498.5 570 V572.5 Z"/>
<path d="M2486.0 572.6 L2489.5 568.5 L2493.0 572.6 Z" fill="#fff"/>
<path d="M2480.5 581 V578 L2485.0 574 H2494.0 L2498.5 578 V581 Z"/>
<path d="M2052 571.5 H2480 M2052 579.5 H2480" stroke="#000" stroke-width="2" stroke-dasharray="13 9" stroke-dashoffset="-4"/>
<path d="M1691 608.5 L2290 608.5" fill="none" stroke="#000" stroke-width="4.5" stroke-dasharray="15 7.462" stroke-linecap="square"/>
<path d="M2290 608.5 L2290 706" fill="none" stroke="#000" stroke-width="4.5" stroke-dasharray="15 5.625" stroke-linecap="square"/>
<path d="M2290 706 L1691 706" fill="none" stroke="#000" stroke-width="4.5" stroke-dasharray="15 7.462" stroke-linecap="square"/>
<path d="M1691 706 L1691 608.5" fill="none" stroke="#000" stroke-width="4.5" stroke-dasharray="15 5.625" stroke-linecap="square"/>
<text x="2300" y="619" font-size="16.0" font-weight="bold" fill="#000" textLength="120" lengthAdjust="spacingAndGlyphs">CLOCKSPRING</text>
<text x="2300" y="641" font-size="16.0" font-weight="bold" fill="#000" textLength="87" lengthAdjust="spacingAndGlyphs">ASSEMBLY</text>
<rect x="1734.0" y="600" width="9.0" height="11" fill="#000"/>
<rect x="2039.75" y="600" width="8.5" height="11" fill="#000"/>
<rect x="2226.75" y="600" width="8.5" height="11" fill="#000"/>
<g fill="none" stroke="#000" stroke-width="1.8">
<circle cx="1740.0" cy="654" r="13.5"/>
<circle cx="1738.5" cy="654.5" r="19"/>
<path d="M1734.5 679 L1724.5 674 L1715.5 666 V642 L1724.5 633 L1733.5 629 H1744.5 L1753.5 633 L1761.5 642 L1763.5 654 L1761.5 662 L1753.5 670 L1744.5 674"/>
<path d="M1738.5 610 V641.5 H1734.5"/>
<path d="M1734.5 679 H1738.5 V706"/>
</g>
<g fill="none" stroke="#000" stroke-width="1.8">
<circle cx="2045.5" cy="654" r="13.5"/>
<circle cx="2044" cy="654.5" r="19"/>
<path d="M2040 679 L2030 674 L2021 666 V642 L2030 633 L2039 629 H2050 L2059 633 L2067 642 L2069 654 L2067 662 L2059 670 L2050 674"/>
<path d="M2044 610 V641.5 H2040"/>
<path d="M2040 679 H2044 V706"/>
</g>
<g fill="none" stroke="#000" stroke-width="1.8">
<circle cx="2232.5" cy="654" r="13.5"/>
<circle cx="2231" cy="654.5" r="19"/>
<path d="M2227 679 L2217 674 L2208 666 V642 L2217 633 L2226 629 H2237 L2246 633 L2254 642 L2256 654 L2254 662 L2246 670 L2237 674"/>
<path d="M2231 610 V641.5 H2227"/>
<path d="M2227 679 H2231 V706"/>
</g>
<text x="2521" y="688" font-size="16.0" font-weight="bold" fill="#000" textLength="84" lengthAdjust="spacingAndGlyphs">STEERING</text>
<text x="2521" y="708" font-size="16.0" font-weight="bold" fill="#000" textLength="72" lengthAdjust="spacingAndGlyphs">COLUMN</text>
<path d="M1606 724.5 L2629 724.5" fill="none" stroke="#000" stroke-width="4" stroke-dasharray="15 7.400" stroke-linecap="square"/>
<path d="M2629 724.5 L2629 1057" fill="none" stroke="#000" stroke-width="4" stroke-dasharray="15 7.679" stroke-linecap="square"/>
<path d="M2629 1057 L1606 1057" fill="none" stroke="#000" stroke-width="4" stroke-dasharray="15 7.400" stroke-linecap="square"/>
<path d="M1606 1057 L1606 724.5" fill="none" stroke="#000" stroke-width="4" stroke-dasharray="15 7.679" stroke-linecap="square"/>
<text x="1626" y="747" font-size="14.5" font-weight="bold" fill="#000" textLength="63" lengthAdjust="spacingAndGlyphs">STEERING</text>
<text x="1626" y="761" font-size="14.5" font-weight="bold" fill="#000" textLength="65" lengthAdjust="spacingAndGlyphs">ASSEMBLY</text>
<rect x="1734.0" y="704" width="9.0" height="174" fill="#000"/>
<circle cx="1738.5" cy="891" r="6.5" fill="#fff"/>
<circle cx="1738.5" cy="891" r="6.5" fill="#000"/>
<rect x="1734.0" y="905" width="9.0" height="22" fill="#000"/>
<rect x="1649" y="886.0" width="76" height="9.0" fill="#000"/>
<rect x="1649.0" y="886" width="9.0" height="41" fill="#000"/>
<rect x="1753" y="886.0" width="15" height="9.0" fill="#000"/>
<rect x="1768.5" y="869.5" width="66.5" height="39.5" fill="none" stroke="#000" stroke-width="3"/>
<path d="M1770 891 H1782 L1786 884 L1791 896 L1796 884 L1801 896 L1806 884 L1810 891 H1833" fill="none" stroke="#000" stroke-width="1.6"/>
<rect x="1835" y="886.0" width="27" height="9.0" fill="#000"/>
<text x="1768" y="856" font-size="13.1" font-weight="bold" fill="#000" textLength="67" lengthAdjust="spacingAndGlyphs">1000 OHMS</text>
<rect x="1861.5" y="799.5" width="158.5" height="149.5" fill="none" stroke="#000" stroke-width="3.2"/>
<path d="M1927.5 800 L1927.5 762.5 L2030 762.5" fill="none" stroke="#000" stroke-width="9" stroke-linejoin="miter" stroke-linecap="butt"/>
<rect x="2058" y="758.0" width="163" height="9.0" fill="#000"/>
<g fill="none" stroke="#000" stroke-width="1.6">
<path d="M1927.5 801 V896"/>
<path d="M1862 890 H1882"/>
<path d="M1967 890 V1005"/>
<path d="M1886 896 Q1900 916 1927 908 Q1950 912 1962 896" stroke-dasharray="6 6"/>
<rect x="1988" y="809" width="31" height="61"/>
</g>
<path d="M1880 885 L1886 891 L1880 897" fill="none" stroke="#000" stroke-width="2"/>
<path d="M1962 885 L1968 890 L1962 895" fill="none" stroke="#000" stroke-width="2"/>
<circle cx="1927.5" cy="896" r="3"/>
<path d="M1916 908 H1938 L1928 898 Z"/>
<circle cx="1986" cy="838" r="21.5" fill="#fff" stroke="#000" stroke-width="4"/>
<path d="M1988 818 V830 H1983 V846 H1988 V858 M1985 835 H1995 L1998 838 L1995 841 H1985" fill="none" stroke="#000" stroke-width="2.2"/>
<text x="1871" y="878" font-size="13.1" font-weight="bold" fill="#000" textLength="19" lengthAdjust="spacingAndGlyphs">ON</text>
<text x="1957" y="878" font-size="13.1" font-weight="bold" fill="#000" textLength="24" lengthAdjust="spacingAndGlyphs">OFF</text>
<rect x="2073" y="799.5" width="271.5" height="149.5" fill="none" stroke="#000" stroke-width="3.5"/>
<circle cx="2106" cy="838" r="21.5" fill="#fff" stroke="#000" stroke-width="4"/>
<g fill="none" stroke="#000" stroke-width="1.6">
<rect x="2075" y="809" width="33" height="61"/>
</g>
<path d="M2108 818 V830 H2103 V846 H2108 V858 M2105 835 H2115 L2118 838 L2115 841 H2105" fill="none" stroke="#000" stroke-width="2.2"/>
<rect x="2021" y="805.5" width="13" height="9.0" fill="#000"/>
<rect x="2056" y="805.5" width="16" height="9.0" fill="#000"/>
<rect x="2021" y="864.5" width="13" height="9.0" fill="#000"/>
<rect x="2056" y="864.5" width="16" height="9.0" fill="#000"/>
<rect x="2040.25" y="704" width="9.5" height="93" fill="#000"/>
<circle cx="2045" cy="810" r="7" fill="#fff"/>
<circle cx="2045" cy="810" r="7" fill="#000"/>
<circle cx="2045" cy="869" r="7" fill="#fff"/>
<circle cx="2045" cy="869" r="7" fill="#000"/>
<rect x="2040.25" y="884" width="9.5" height="191" fill="#000"/>
<rect x="2227.5" y="704" width="9.0" height="45" fill="#000"/>
<circle cx="2232" cy="762" r="7" fill="#fff"/>
<circle cx="2232" cy="762" r="7" fill="#000"/>
<rect x="2227.5" y="775" width="9.0" height="25" fill="#000"/>
<g fill="none" stroke="#000" stroke-width="1.8">
<path d="M2232 801 V819 M2157 830 V819 H2287 V862"/>
<path d="M2157 830 L2139 861"/>
<path d="M2149 871 H2159"/>
<path d="M2173 860 V870 M2244 860 V870 M2328 860 V870"/>
<path d="M2173 912 V932 H2328 V912 M2244 912 V949"/>
<path d="M2254 874 Q2270 880 2287 878 Q2305 880 2318 870" stroke-dasharray="5 5"/>
</g>
<path d="M2173 870 L2177 872.1 L2169 876.3 L2177 880.5 L2169 884.7 L2177 888.9 L2169 893.1 L2177 897.3 L2169 901.5 L2177 905.7 L2169 909.9 L2173 912" fill="none" stroke="#000" stroke-width="1.6" stroke-linejoin="miter" stroke-linecap="butt"/>
<path d="M2244 870 L2248 872.1 L2240 876.3 L2248 880.5 L2240 884.7 L2248 888.9 L2240 893.1 L2248 897.3 L2240 901.5 L2248 905.7 L2240 909.9 L2244 912" fill="none" stroke="#000" stroke-width="1.6" stroke-linejoin="miter" stroke-linecap="butt"/>
<path d="M2328 870 L2332 872.1 L2324 876.3 L2332 880.5 L2324 884.7 L2332 888.9 L2324 893.1 L2332 897.3 L2324 901.5 L2332 905.7 L2324 909.9 L2328 912" fill="none" stroke="#000" stroke-width="1.6" stroke-linejoin="miter" stroke-linecap="butt"/>
<path d="M2168 862 L2173 856 L2178 862 Z M2239 864 L2244 858 L2249 864 Z M2323 864 L2328 858 L2333 864 Z"/>
<path d="M2282 858 H2292 V868 H2282 Z M2279 880 H2295 L2287 872 Z"/>
<circle cx="2157" cy="830" r="3"/><circle cx="2139" cy="861" r="3"/><circle cx="2232" cy="819" r="2.5"/><circle cx="2244" cy="932" r="2.5"/>
<text x="2225" y="836" font-size="13.1" font-weight="bold" fill="#000" textLength="28" lengthAdjust="spacingAndGlyphs">SET/</text>
<text x="2164" y="852" font-size="13.1" font-weight="bold" fill="#000" textLength="51" lengthAdjust="spacingAndGlyphs">RESUME</text>
<text x="2225" y="852" font-size="13.1" font-weight="bold" fill="#000" textLength="40" lengthAdjust="spacingAndGlyphs">ACCEL</text>
<text x="2297" y="850" font-size="13.1" font-weight="bold" fill="#000" textLength="41" lengthAdjust="spacingAndGlyphs">COAST</text>
<text x="2115" y="897" font-size="13.1" font-weight="bold" fill="#000" textLength="27" lengthAdjust="spacingAndGlyphs">2200</text>
<text x="2115" y="913" font-size="13.1" font-weight="bold" fill="#000" textLength="39" lengthAdjust="spacingAndGlyphs">OHMS</text>
<text x="2192" y="897" font-size="13.1" font-weight="bold" fill="#000" textLength="23" lengthAdjust="spacingAndGlyphs">680</text>
<text x="2192" y="913" font-size="13.1" font-weight="bold" fill="#000" textLength="39" lengthAdjust="spacingAndGlyphs">OHMS</text>
<text x="2278" y="897" font-size="13.1" font-weight="bold" fill="#000" textLength="22" lengthAdjust="spacingAndGlyphs">120</text>
<text x="2278" y="913" font-size="13.1" font-weight="bold" fill="#000" textLength="38" lengthAdjust="spacingAndGlyphs">OHMS</text>
<text x="2355" y="808" font-size="13.1" font-weight="bold" fill="#000" textLength="40" lengthAdjust="spacingAndGlyphs">SPEED</text>
<text x="2355" y="823" font-size="13.1" font-weight="bold" fill="#000" textLength="61" lengthAdjust="spacingAndGlyphs">CONTROL</text>
<text x="2355" y="838" font-size="14.5" font-weight="bold" fill="#000" textLength="49" lengthAdjust="spacingAndGlyphs">SWITCH</text>
<text x="2355" y="854" font-size="13.1" font-weight="bold" fill="#000" textLength="65" lengthAdjust="spacingAndGlyphs">ASSEMBLY</text>
<rect x="2457" y="827" width="65" height="79.5" fill="none" stroke="#000" stroke-width="3.5"/>
<g fill="none" stroke="#000" stroke-width="1.8">
<path d="M2489.5 828 V846 L2471 880"/>
<path d="M2482 890 H2492"/>
<path d="M2505 883 V906"/>
</g>
<circle cx="2489.5" cy="846" r="3"/><circle cx="2471" cy="880" r="3"/>
<path d="M2500 886 L2505 878 L2510 886 Z"/>
<text x="2533" y="836" font-size="13.1" font-weight="bold" fill="#000" textLength="59" lengthAdjust="spacingAndGlyphs">IGNITION</text>
<text x="2533" y="852" font-size="13.1" font-weight="bold" fill="#000" textLength="23" lengthAdjust="spacingAndGlyphs">KEY</text>
<text x="2533" y="866" font-size="13.1" font-weight="bold" fill="#000" textLength="61" lengthAdjust="spacingAndGlyphs">WARNING</text>
<text x="2533" y="882" font-size="13.1" font-weight="bold" fill="#000" textLength="49" lengthAdjust="spacingAndGlyphs">SWITCH</text>
<path d="M2505.5 905 L2505.5 964 L2261 964" fill="none" stroke="#000" stroke-width="9" stroke-linejoin="miter" stroke-linecap="butt"/>
<rect x="1898" y="959.5" width="56" height="9.0" fill="#000"/>
<rect x="1983" y="959.5" width="47" height="9.0" fill="#000"/>
<rect x="2058" y="959.5" width="171" height="9.0" fill="#000"/>
<path d="M1968.5 949 L1968.5 1005.5 L2030 1005.5" fill="none" stroke="#000" stroke-width="9" stroke-linejoin="miter" stroke-linecap="butt"/>
<path d="M2058 1005.5 L2216 1005.5 L2236 1026" fill="none" stroke="#000" stroke-width="9" stroke-linejoin="miter" stroke-linecap="butt"/>
<rect x="2239.25" y="949" width="9.5" height="68" fill="#000"/>
<circle cx="2246" cy="1031" r="7" fill="#fff"/>
<circle cx="2246" cy="1031" r="7" fill="#000"/>
<rect x="2239.25" y="1045" width="9.5" height="31" fill="#000"/>
<rect x="1620" y="927.5" width="66.5" height="81" fill="none" stroke="#000" stroke-width="3.2"/>
<rect x="1705" y="927.5" width="67" height="81" fill="none" stroke="#000" stroke-width="3.2"/>
<g fill="none" stroke="#000" stroke-width="1.8"><path d="M1653.5 928 V948 L1635.5 982"/><path d="M1645.5 991 H1654.5"/><path d="M1669.5 985 V1009"/></g>
<circle cx="1653.5" cy="948" r="3"/><circle cx="1635.5" cy="982" r="3"/><path d="M1664.5 986 L1669.5 979 L1674.5 986 Z"/>
<g fill="none" stroke="#000" stroke-width="1.8"><path d="M1738.5 928 V948 L1720.5 982"/><path d="M1730.5 991 H1739.5"/><path d="M1754.5 985 V1009"/></g>
<circle cx="1738.5" cy="948" r="3"/><circle cx="1720.5" cy="982" r="3"/><path d="M1749.5 986 L1754.5 979 L1759.5 986 Z"/>
<path d="M1670.5 1009 L1670.5 1036 L1745 1036" fill="none" stroke="#000" stroke-width="8" stroke-linejoin="miter" stroke-linecap="butt"/>
<circle cx="1756" cy="1037.5" r="7" fill="#fff"/>
<circle cx="1756" cy="1037.5" r="7" fill="#000"/>
<path d="M1768 1036 L1903 1036 L1903 964 L1954 964" fill="none" stroke="#000" stroke-width="9" stroke-linejoin="miter" stroke-linecap="butt"/>
<rect x="1752.0" y="1009" width="8.0" height="15" fill="#000"/>
<rect x="1752.0" y="1052" width="8.0" height="42" fill="#000"/>
<path d="M1749 1109 V1104 a7 5 0 0 1 14 0 V1109 Z"/>
<rect x="1744" y="1109" width="24" height="2.5" fill="#000"/>
<rect x="1747" y="1114" width="18" height="2" fill="#000"/>
<rect x="1751" y="1119" width="10" height="2" fill="#000"/>
<text x="1782" y="962" font-size="13.1" font-weight="bold" fill="#000" textLength="37" lengthAdjust="spacingAndGlyphs">HORN</text>
<text x="1782" y="978" font-size="13.1" font-weight="bold" fill="#000" textLength="65" lengthAdjust="spacingAndGlyphs">SWITCHES</text>
<text x="1632" y="1081" font-size="14.5" font-weight="bold" fill="#000" textLength="83" lengthAdjust="spacingAndGlyphs">STEERING</text>
<text x="1632" y="1102" font-size="16.0" font-weight="bold" fill="#000" textLength="71" lengthAdjust="spacingAndGlyphs">COLUMN</text>
<text x="1632" y="1120" font-size="16.0" font-weight="bold" fill="#000" textLength="71" lengthAdjust="spacingAndGlyphs">GROUND</text>
<rect x="2336.5" y="977.5" width="144" height="61" fill="none" stroke="#000" stroke-width="3.2"/>
<g fill="none" stroke="#000" stroke-width="1.6">
<path d="M2356 978 V1040 M2467 978 V1040"/>
<path d="M2356 999 H2390 L2394 993 L2398 1003 L2402 993 L2406 1003 L2410 993 L2414 1003 L2418 999 H2467"/>
</g>
<path d="M2357 1003 L2370 1017 H2452 L2466 1003" fill="none" stroke="#000" stroke-width="3.2"/>
<text x="2487" y="990" font-size="13.1" font-weight="bold" fill="#000" textLength="55" lengthAdjust="spacingAndGlyphs">DRIVER'S</text>
<text x="2487" y="1006" font-size="13.1" font-weight="bold" fill="#000" textLength="49" lengthAdjust="spacingAndGlyphs">AIR BAG</text>
<text x="2487" y="1021" font-size="14.5" font-weight="bold" fill="#000" textLength="69" lengthAdjust="spacingAndGlyphs">PAGE 46-2</text>
<rect x="2351.0" y="1038" width="10.0" height="39" fill="#000"/>
<rect x="2462.0" y="1038" width="10.0" height="39" fill="#000"/>
<path d="M1991 1075.6 L2507 1075.6" fill="none" stroke="#000" stroke-width="4.5" stroke-dasharray="15 7.773" stroke-linecap="square"/>
<path d="M2507 1075.6 L2507 1172.5" fill="none" stroke="#000" stroke-width="4.5" stroke-dasharray="15 5.475" stroke-linecap="square"/>
<path d="M2507 1172.5 L1991 1172.5" fill="none" stroke="#000" stroke-width="4.5" stroke-dasharray="15 7.773" stroke-linecap="square"/>
<path d="M1991 1172.5 L1991 1075.6" fill="none" stroke="#000" stroke-width="4.5" stroke-dasharray="15 5.475" stroke-linecap="square"/>
<text x="2517" y="1089" font-size="14.5" font-weight="bold" fill="#000" textLength="120" lengthAdjust="spacingAndGlyphs">CLOCKSPRING</text>
<text x="2517" y="1111" font-size="14.5" font-weight="bold" fill="#000" textLength="87" lengthAdjust="spacingAndGlyphs">ASSEMBLY</text>
<g fill="none" stroke="#000" stroke-width="1.8">
<circle cx="2046.5" cy="1123" r="13.5"/>
<circle cx="2045" cy="1123.5" r="19"/>
<path d="M2041 1148 L2031 1143 L2022 1135 V1111 L2031 1102 L2040 1098 H2051 L2060 1102 L2068 1111 L2070 1123 L2068 1131 L2060 1139 L2051 1143"/>
<path d="M2045 1076 V1110.5 H2041"/>
<path d="M2041 1148 H2045 V1172"/>
</g>
<g fill="none" stroke="#000" stroke-width="1.8">
<circle cx="2245.5" cy="1123" r="13.5"/>
<circle cx="2244" cy="1123.5" r="19"/>
<path d="M2240 1148 L2230 1143 L2221 1135 V1111 L2230 1102 L2239 1098 H2250 L2259 1102 L2267 1111 L2269 1123 L2267 1131 L2259 1139 L2250 1143"/>
<path d="M2244 1076 V1110.5 H2240"/>
<path d="M2240 1148 H2244 V1172"/>
</g>
<g fill="none" stroke="#000" stroke-width="1.8">
<circle cx="2357.5" cy="1123" r="13.5"/>
<circle cx="2356" cy="1123.5" r="19"/>
<path d="M2352 1148 L2342 1143 L2333 1135 V1111 L2342 1102 L2351 1098 H2362 L2371 1102 L2379 1111 L2381 1123 L2379 1131 L2371 1139 L2362 1143"/>
<path d="M2356 1076 V1110.5 H2352"/>
<path d="M2352 1148 H2356 V1172"/>
</g>
<g fill="none" stroke="#000" stroke-width="1.8">
<circle cx="2468.5" cy="1123" r="13.5"/>
<circle cx="2467" cy="1123.5" r="19"/>
<path d="M2463 1148 L2453 1143 L2444 1135 V1111 L2453 1102 L2462 1098 H2473 L2482 1102 L2490 1111 L2492 1123 L2490 1131 L2482 1139 L2473 1143"/>
<path d="M2467 1076 V1110.5 H2463"/>
<path d="M2463 1148 H2467 V1172"/>
</g>
<path d="M1979 1126 L1787 1208 M1979 1126 L1858 1208" stroke="#000" stroke-width="2" fill="none"/>
<path d="M1787 1209 H1678.5 V1297 H1906.5 V1209 H1858" fill="none" stroke="#000" stroke-width="2.2"/>
<text x="1697" y="1232" font-size="20.3" font-weight="normal" fill="#000" textLength="169" lengthAdjust="spacingAndGlyphs">Electrically connects</text>
<text x="1697" y="1257" font-size="20.3" font-weight="normal" fill="#000" textLength="189" lengthAdjust="spacingAndGlyphs">steering wheel controls</text>
<text x="1697" y="1283" font-size="20.3" font-weight="normal" fill="#000" textLength="136" lengthAdjust="spacingAndGlyphs">to body harness.</text>
<rect x="2039.75" y="1171" width="8.5" height="99" fill="#000"/>
<rect x="2035" y="1195" width="18" height="6"/>
<path d="M2035 1203 H2053 V1208 L2050 1211 H2038 L2035 1208 Z"/>
<path d="M2039 1203 H2049 L2047 1207 H2041 Z" fill="#fff"/>
<text x="1971" y="1192" font-size="14.5" font-weight="bold" fill="#000" textLength="55" lengthAdjust="spacingAndGlyphs">C234M</text>
<rect x="1971" y="1195.0" width="56" height="2"/>
<text x="1971" y="1215" font-size="16.0" font-weight="bold" fill="#000" textLength="52" lengthAdjust="spacingAndGlyphs">C234F</text>
<rect x="1971" y="1218.0" width="53" height="2"/>
<text x="2058" y="1221" font-size="13.1" font-weight="bold" fill="#000" textLength="15" lengthAdjust="spacingAndGlyphs">0V</text>
<text x="2014" y="1263" font-size="14.5" font-weight="bold" fill="#000" textLength="18" lengthAdjust="spacingAndGlyphs">57</text>
<text x="2056" y="1263" font-size="14.5" font-weight="bold" fill="#000" textLength="23" lengthAdjust="spacingAndGlyphs">BK</text>
<circle cx="2044" cy="1283" r="7.5" fill="#fff"/>
<circle cx="2044" cy="1283" r="7.5" fill="#000"/>
<text x="2062" y="1286" font-size="14.5" font-weight="bold" fill="#000" textLength="39" lengthAdjust="spacingAndGlyphs">S202</text>
<rect x="2062" y="1288.0" width="41" height="2"/>
<path d="M2044 1298 V1362" stroke="#000" stroke-width="8.5" stroke-dasharray="11 7"/>
<text x="2014" y="1329" font-size="16.0" font-weight="bold" fill="#000" textLength="18" lengthAdjust="spacingAndGlyphs">57</text>
<text x="2056" y="1329" font-size="16.0" font-weight="bold" fill="#000" textLength="23" lengthAdjust="spacingAndGlyphs">BK</text>
<path d="M2037 1379 V1374 a7 5 0 0 1 14 0 V1379 Z"/>
<rect x="2032" y="1379" width="24" height="2.5" fill="#000"/>
<rect x="2035" y="1384" width="18" height="2" fill="#000"/>
<rect x="2039" y="1389" width="10" height="2" fill="#000"/>
<text x="1981" y="1377" font-size="16.0" font-weight="bold" fill="#000" textLength="41" lengthAdjust="spacingAndGlyphs">G200</text>
<rect x="1981" y="1380.0" width="42" height="2"/>
<rect x="1861" y="1389.5" width="145" height="50" fill="none" stroke="#000" stroke-width="2.2"/>
<text x="1869" y="1410" font-size="16.0" font-weight="bold" fill="#000" textLength="123" lengthAdjust="spacingAndGlyphs">SEE  GROUNDS</text>
<text x="1869" y="1431" font-size="16.0" font-weight="normal" fill="#000" textLength="88" lengthAdjust="spacingAndGlyphs">PAGE 10-3</text>
<rect x="2239.0" y="1171" width="9.0" height="185" fill="#000"/>
<path d="M2242.0 1222 L2245.0 1230" stroke="#fff" stroke-width="2"/>
<path d="M2242.0 1255 L2245.0 1263" stroke="#fff" stroke-width="2"/>
<path d="M2242.0 1288 L2245.0 1296" stroke="#fff" stroke-width="2"/>
<path d="M2242.0 1325 L2245.0 1333" stroke="#fff" stroke-width="2"/>
<rect x="2234.5" y="1195" width="18" height="6"/>
<path d="M2234.5 1203 H2252.5 V1208 L2249.5 1211 H2237.5 L2234.5 1208 Z"/>
<path d="M2238.5 1203 H2248.5 L2246.5 1207 H2240.5 Z" fill="#fff"/>
<path d="M2234.5 1309.5 V1307 L2239.0 1303 H2248.0 L2252.5 1307 V1309.5 Z"/>
<path d="M2240.0 1309.6 L2243.5 1305.5 L2247.0 1309.6 Z" fill="#fff"/>
<path d="M2234.5 1318 V1315 L2239.0 1311 H2248.0 L2252.5 1315 V1318 Z"/>
<path d="M2213 1402 H2275 L2244 1353 Z"/>
<text x="2236" y="1393" font-size="23.3" font-weight="bold" fill="#fff" textLength="15" lengthAdjust="spacingAndGlyphs">B</text>
<text x="2200" y="1262" font-size="16.0" font-weight="bold" fill="#000" textLength="29" lengthAdjust="spacingAndGlyphs">848</text>
<text x="2255" y="1262" font-size="16.0" font-weight="bold" fill="#000" textLength="41" lengthAdjust="spacingAndGlyphs">DG/O</text>
<text x="2168" y="1300" font-size="14.5" font-weight="bold" fill="#000" textLength="52" lengthAdjust="spacingAndGlyphs">C159F</text>
<rect x="2168" y="1303.0" width="53" height="2"/>
<text x="2168" y="1323" font-size="16.0" font-weight="bold" fill="#000" textLength="56" lengthAdjust="spacingAndGlyphs">C159M</text>
<rect x="2168" y="1325.0" width="57" height="2"/>
<text x="2200" y="1343" font-size="14.5" font-weight="bold" fill="#000" textLength="29" lengthAdjust="spacingAndGlyphs">848</text>
<text x="2255" y="1343" font-size="14.5" font-weight="bold" fill="#000" textLength="41" lengthAdjust="spacingAndGlyphs">DG/O</text>
<text x="2200" y="1426" font-size="16.0" font-weight="bold" fill="#000" textLength="96" lengthAdjust="spacingAndGlyphs">FROM  C157</text>
<text x="2200" y="1448" font-size="16.0" font-weight="normal" fill="#000" textLength="88" lengthAdjust="spacingAndGlyphs">PAGE 31-2</text>
<text x="2282" y="1193" font-size="16.0" font-weight="bold" fill="#000" textLength="56" lengthAdjust="spacingAndGlyphs">C233M</text>
<rect x="2282" y="1195.0" width="57" height="2"/>
<text x="2282" y="1215" font-size="16.0" font-weight="bold" fill="#000" textLength="52" lengthAdjust="spacingAndGlyphs">C233F</text>
<rect x="2282" y="1218.0" width="53" height="2"/>
<path d="M2052 1198 H2234 M2052 1206.5 H2234 M2364 1198 H2460 M2364 1206.5 H2460" stroke="#000" stroke-width="2" stroke-dasharray="13 9" stroke-dashoffset="-3"/>
<rect x="2351.0" y="1171" width="9.0" height="91" fill="#000"/>
<path d="M2354.0 1228 L2357.0 1236" stroke="#fff" stroke-width="2"/>
<rect x="2346.5" y="1195" width="18" height="6"/>
<path d="M2346.5 1203 H2364.5 V1208 L2361.5 1211 H2349.5 L2346.5 1208 Z"/>
<path d="M2350.5 1203 H2360.5 L2358.5 1207 H2352.5 Z" fill="#fff"/>
<path d="M2345.5 1260 H2365.5 L2355.5 1276 Z"/>
<rect x="2463.5" y="1171" width="9.0" height="91" fill="#000"/>
<path d="M2466.5 1228 L2469.5 1236" stroke="#fff" stroke-width="2"/>
<rect x="2459" y="1195" width="18" height="6"/>
<path d="M2459 1203 H2477 V1208 L2474 1211 H2462 L2459 1208 Z"/>
<path d="M2463 1203 H2473 L2471 1207 H2465 Z" fill="#fff"/>
<path d="M2458 1274 H2478 L2470 1261 H2466 Z"/>
<text x="2314" y="1262" font-size="16.0" font-weight="bold" fill="#000" textLength="29" lengthAdjust="spacingAndGlyphs">615</text>
<text x="2366" y="1262" font-size="16.0" font-weight="bold" fill="#000" textLength="44" lengthAdjust="spacingAndGlyphs">GY/W</text>
<text x="2428" y="1262" font-size="16.0" font-weight="bold" fill="#000" textLength="28" lengthAdjust="spacingAndGlyphs">614</text>
<text x="2480" y="1262" font-size="16.0" font-weight="bold" fill="#000" textLength="41" lengthAdjust="spacingAndGlyphs">GY/O</text>
<path d="M2322 1277 V1280 L2326 1284 H2410 L2416 1290 L2422 1284 H2503 L2506 1280 V1277" fill="none" stroke="#000" stroke-width="4.5"/>
<text x="2379" y="1308" font-size="16.0" font-weight="bold" fill="#000" textLength="80" lengthAdjust="spacingAndGlyphs">AIR  BAGS</text>
<text x="2379" y="1331" font-size="17.4" font-weight="normal" fill="#000" textLength="88" lengthAdjust="spacingAndGlyphs">PAGE 46-2</text>
</g>
</svg>
<!--/DIAG-->
</body></html>
